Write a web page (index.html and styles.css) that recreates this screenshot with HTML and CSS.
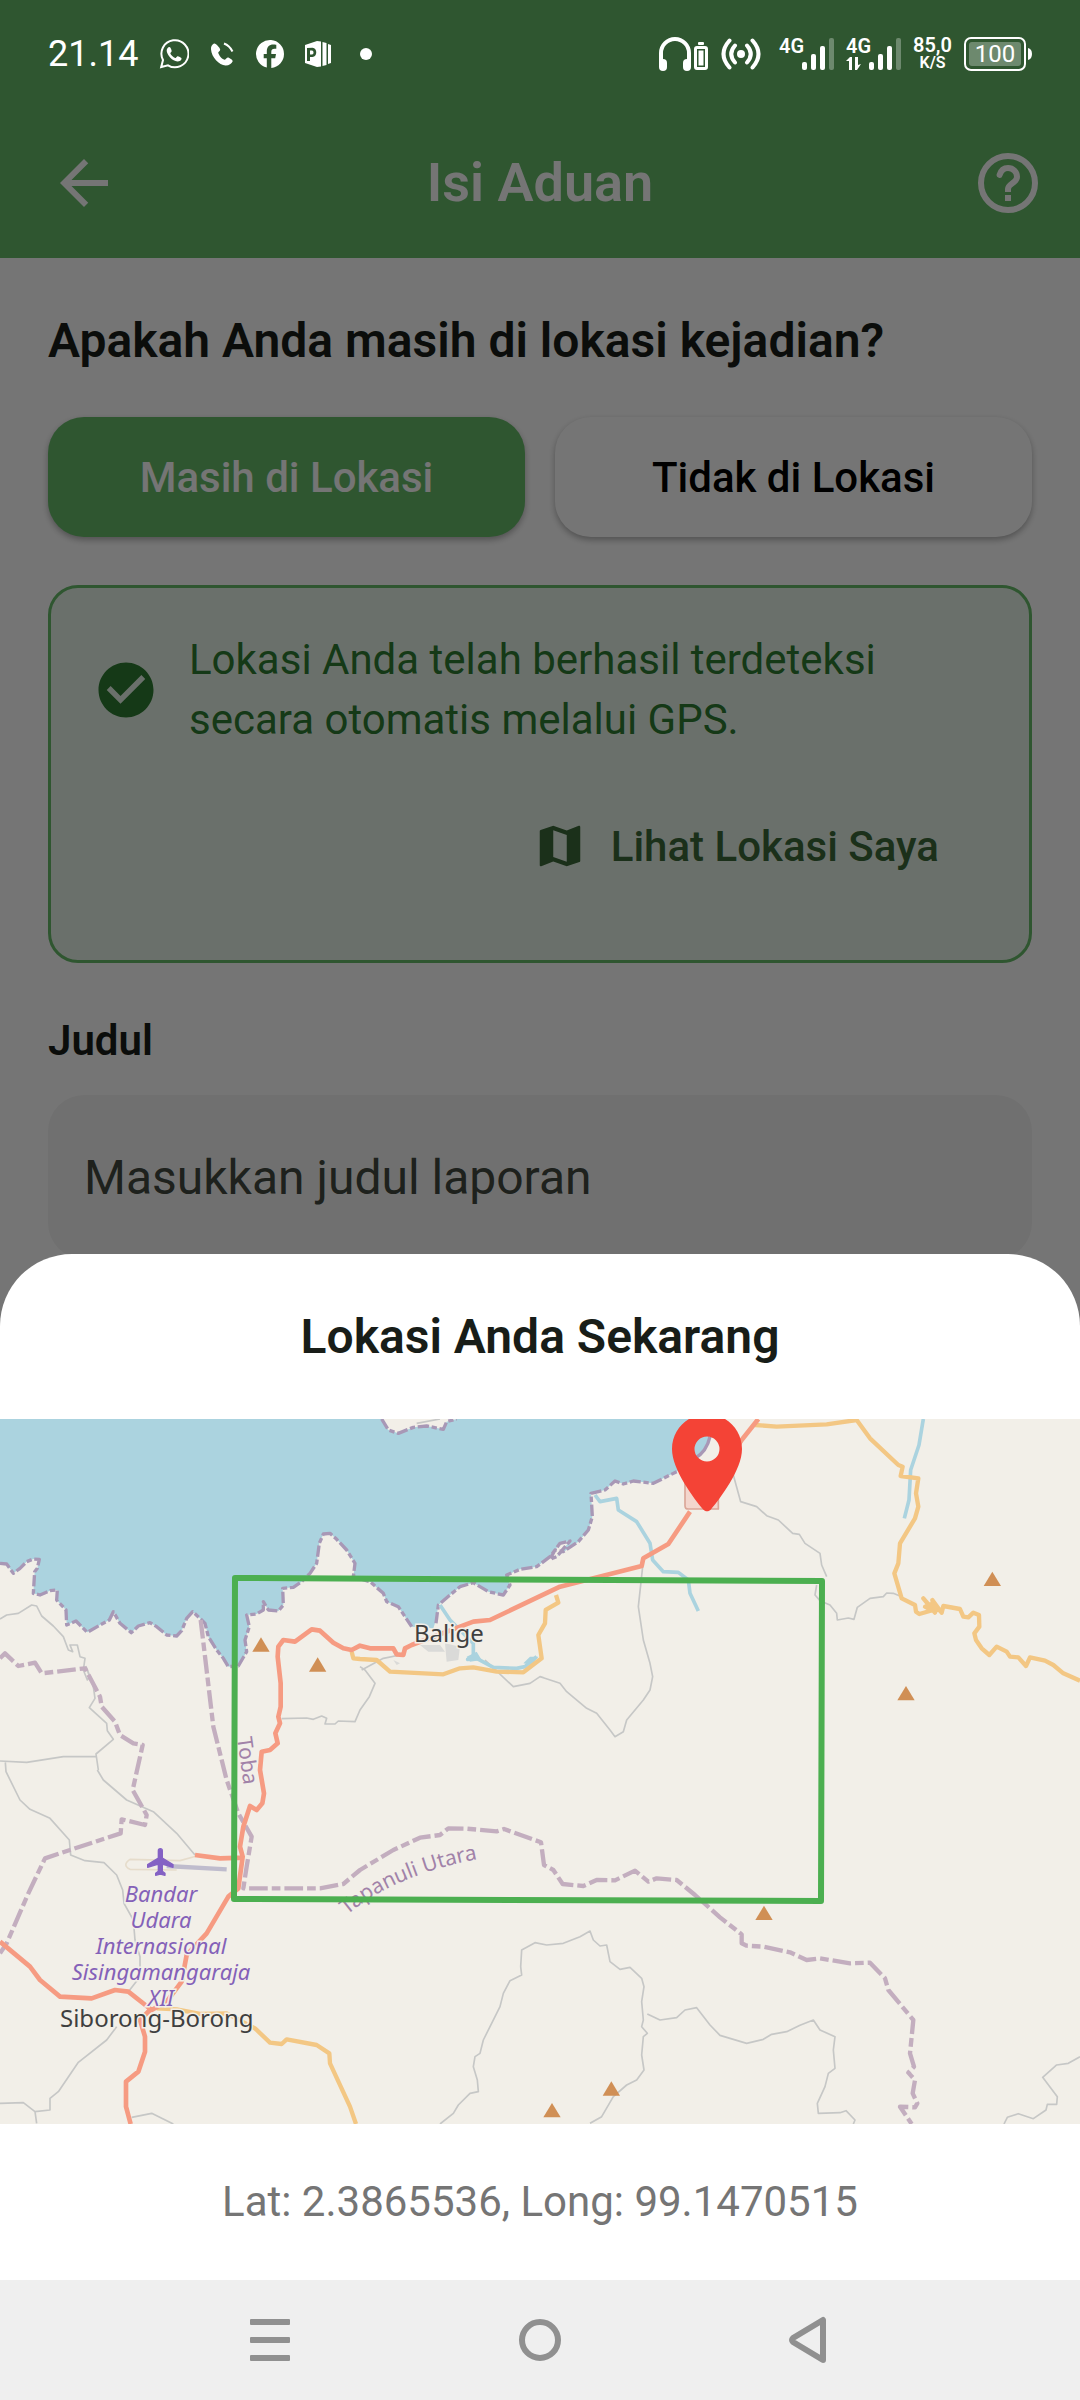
FILE: index.html
```html
<!DOCTYPE html>
<html lang="id">
<head>
<meta charset="utf-8">
<meta name="viewport" content="width=device-width, initial-scale=1">
<title>Isi Aduan</title>
<link rel="stylesheet" href="styles.css">
</head>
<body>
<div class="screen">
  <div class="app">
    <header class="appbar">
      <button class="icon-button back" type="button" aria-label="Kembali">
        <svg class="icon" viewBox="0 0 24 24"><path d="M20 11H7.83l5.59-5.59L12 4l-8 8 8 8 1.41-1.41L7.83 13H20v-2z"/></svg>
      </button>
      <h1 class="appbar-title">Isi Aduan</h1>
      <button class="icon-button help" type="button" aria-label="Bantuan">
        <svg class="icon" viewBox="0 0 24 24"><circle class="line" cx="12" cy="12" r="9"/><path class="line round" d="M9.2 9.3C9.7 7.6 10.8 7 12 7c1.700 0 3 1.300 3 2.900C15 12 12 12.200 12 14"/><rect x="11" y="16" width="2" height="2"/><rect x="11" y="14" width="2" height="1"/></svg>
      </button>
    </header>
    <main class="content">
      <h2 class="question">Apakah Anda masih di lokasi kejadian?</h2>
      <div class="choices">
        <button class="choice choice-active" type="button">Masih di Lokasi</button>
        <button class="choice" type="button">Tidak di Lokasi</button>
      </div>
      <section class="notice">
        <div class="notice-row">
          <svg class="notice-icon" viewBox="0 0 24 24"><path d="M12 2C6.480 2 2 6.480 2 12s4.480 10 10 10 10-4.480 10-10S17.520 2 12 2zm-2 15l-5-5 1.410-1.410L10 14.170l7.590-7.590L19 8l-9 9z"/></svg>
          <p class="notice-text">Lokasi Anda telah berhasil terdeteksi secara otomatis melalui GPS.</p>
        </div>
        <button class="map-button" type="button">
          <svg class="map-icon" viewBox="0 0 24 24"><path d="M20.500 3l-.160.030L15 5.100 9 3 3.360 4.900c-.210.070-.360.250-.360.480V20.500c0 .280.220.500.500.500l.160-.030L9 18.900l6 2.100 5.640-1.900c.210-.070.360-.250.360-.480V3.500c0-.280-.220-.500-.500-.500zM15 19l-6-2.110V5l6 2.110V19z"/></svg>
          Lihat Lokasi Saya
        </button>
      </section>
      <label class="field-label" for="judul">Judul</label>
      <input class="field" id="judul" type="text" placeholder="Masukkan judul laporan">
    </main>
  </div>

  <div class="overlay">
    <div class="status">
      <div class="status-left">
        <span class="clock">21.14</span>
        <svg class="status-icon" viewBox="0 0 30 30"><path class="line" d="M2.200 28l1.800-7A13.500 13.500 0 1 1 9 26.300z"/><path d="M10.500 8c-1.500.100-3 1.800-2.800 4 .400 4 5.800 10.400 10.700 10.400 2.300 0 4.100-1.300 4.200-3 0-.700-3.600-2.400-4.200-2.200-.600.200-1.600 2-2.200 1.900-1.800-.600-4.400-3.200-4.900-4.900.100-.700 1.500-1.300 1.400-2.200C12.600 11 11.600 8 10.500 8z"/></svg>
        <svg class="status-icon" viewBox="0 0 30 30"><path d="M7 4.500C5 5.500 3.800 7.500 4 10.200c.500 8 8 16 14.500 16.200 3.500.100 6-1.600 7.200-4.200.300-1-3.700-3.800-5-3.600-1.300.300-2.200 2.300-3.200 2.200-2.800-.800-5.500-4.300-6.300-7 .100-1.200 2.200-2 2-3.400C12.800 8.800 9 4 7 4.500z"/><path class="line" d="M17 4.500q5.500 2 8.500 8"/></svg>
        <svg class="status-icon" viewBox="0 0 30 30"><path d="M29 15a14 14 0 1 0-17.200 13.600v-9.300H8.700V15h3.100v-2.500c0-4.800 2.300-7 6.600-7 .900 0 2.300.200 2.900.300v4h-1.700c-2.300 0-3.300.900-3.300 3.100V15h4.700l-.800 4.300h-3.900v9.600A14 14 0 0 0 29 15z"/></svg>
        <svg class="status-icon" viewBox="0 0 30 30"><path fill-rule="evenodd" d="M2 6l12-4v26l-12-4zM4 9v13h3v-4h2.500c5 0 5-9.200 0-9.200zM7 11.500h2c2 0 2 4 0 4H7z"/><path d="M14 2l4 .500v25L14 28zM19.500 3l4 1v22l-4 1zM25 5l3 1v18l-3 1z"/></svg>
        <svg class="status-icon" viewBox="0 0 30 30"><circle cx="15" cy="15" r="6"/></svg>
      </div>
      <div class="status-right">
        <svg class="headset" viewBox="0 0 50 36"><path class="line thick" d="M2 29V17a14 14 0 0 1 28 0v12"/><rect x="0" y="23" width="8" height="12" rx="4"/><rect x="24" y="23" width="8" height="12" rx="4"/><rect x="39" y="6" width="6" height="3" rx="1"/><path fill-rule="evenodd" d="M38 10h8q3 0 3 3v18q0 3-3 3h-8q-3 0-3-3V13q0-3 3-3zM38 13v18h8V13zM39.500 14.500h5v15h-5z"/></svg>
        <svg class="hotspot" viewBox="0 0 40 32"><circle cx="20" cy="16" r="4"/><path class="line thick round" d="M8.500 2.500Q-3.500 16 8.500 29.500M31.500 2.500Q43.500 16 31.500 29.500M14 7.500Q6.500 16 14 24.500M26 7.500Q33.500 16 26 24.500"/></svg>
        <svg class="signal" viewBox="0 -4 55 42"><text class="net" x="0" y="16">4G</text><rect x="23" y="25" width="5" height="8" rx="2"/><rect x="32" y="17" width="5" height="16" rx="2"/><rect x="41" y="9" width="5" height="24" rx="2"/><rect class="dim" x="50" y="1" width="5" height="32" rx="2"/></svg>
        <svg class="signal" viewBox="0 -4 55 42"><text class="net" x="0" y="16">4G</text><path d="M0 24l4-4h2v13H3v-9zM9 20h3v8l3-1-4 6H9z"/><rect x="23" y="25" width="5" height="8" rx="2"/><rect x="32" y="17" width="5" height="16" rx="2"/><rect x="41" y="9" width="5" height="24" rx="2"/><rect class="dim" x="50" y="1" width="5" height="32" rx="2"/></svg>
        <div class="speed"><span>85,0</span><span class="unit">K/S</span></div>
        <svg class="battery" viewBox="0 0 68 36"><rect class="line" x="1" y="2" width="60" height="32" rx="6"/><rect class="dim" x="5" y="6" width="52" height="24" rx="3"/><path d="M64 12q4 1 4 6t-4 6z"/><text class="level" x="31" y="26" text-anchor="middle">100</text></svg>
      </div>
    </div>

    <section class="sheet" role="dialog" aria-labelledby="sheet-title">
      <h2 class="sheet-title" id="sheet-title">Lokasi Anda Sekarang</h2>
      <svg class="map" viewBox="0 0 1080 705" preserveAspectRatio="xMidYMid slice" role="img" aria-label="Peta lokasi">
        <defs>
          <path id="peak" d="M0-22L26 21H-26z"/>
          <path id="regency" d="M347 496Q398 453 490 438"/>
        </defs>
        <g transform="scale(.333333) translate(0 -27)">
          <path class="water" d="M0 27V460L20 462 40 490 60 475 80 455 100 447 118 448 112 475 104 485 100 550 120 555 150 542 172 540 170 570 198 600 200 645 228 633 262 667 300 645 328 630 340 605 360 640 394 668 415 648 450 638 470 650 500 675 530 678 545 662 560 625 578 605 600 625 615 640 625 680 650 720 670 745 685 770 715 768 740 725 735 690 748 650 740 615 770 612 790 600 790 575 805 600 835 603 850 585 848 535 880 532 905 515 930 490 950 460 958 400 970 372 990 370 1010 388 1040 420 1065 460 1060 500 1110 515 1150 550 1160 575 1195 590 1215 620 1235 650 1300 655 1308 630 1315 585 1350 555 1380 530 1420 518 1465 545 1510 555 1530 525 1520 495 1560 478 1610 470 1650 440 1680 400 1710 393 1670 440 1735 395 1765 360 1777 320 1773 250 1815 240 1845 213 1870 222 1900 213 1960 220 1990 205 2030 185 2095 140 2130 90 2110 27z"/>
          <path class="coast" d="M0 460L20 462 40 490 60 475 80 455 100 447 118 448 112 475 104 485 100 550 120 555 150 542 172 540 170 570 198 600 200 645 228 633 262 667 300 645 328 630 340 605 360 640 394 668 415 648 450 638 470 650 500 675 530 678 545 662 560 625 578 605 600 625 615 640 625 680 650 720 670 745 685 770 715 768 740 725 735 690 748 650 740 615 770 612 790 600 790 575 805 600 835 603 850 585 848 535 880 532 905 515 930 490 950 460 958 400 970 372 990 370 1010 388 1040 420 1065 460 1060 500 1110 515 1150 550 1160 575 1195 590 1215 620 1235 650M1308 640L1315 585 1350 555 1380 530 1420 518 1465 545 1510 555 1530 525 1520 495 1560 478 1610 470 1650 440 1680 400 1710 393 1670 440 1650 448 1665 420 1690 425 1735 395 1765 360 1777 320 1773 250 1815 240 1845 213 1870 222 1900 213 1960 220 1990 205 2030 185"/>
          <path class="coast solid" d="M2085 145Q2120 125 2130 80"/>
          <path class="land" d="M1145 27L1165 60 1195 70 1240 52 1280 48 1330 58 1340 35 1370 27z"/>
          <path class="coast" d="M1145 27L1165 60 1195 70 1240 52 1280 48 1330 58 1340 35 1370 27"/>

          <!-- minor roads -->
          <path class="minor" d="M0 627L20 615 55 610 95 585 110 588 125 618 160 648 190 680 205 720 218 725 210 705 232 705 240 740 255 745 250 780 262 810 270 800 258 770 280 830 285 865 268 893 320 940 322 962 340 988 288 1032 295 1080M0 1053L80 1057 190 1040 288 1040M16 1057L18 1085 60 1170 90 1198 150 1225 208 1290 212 1335 255 1352 312 1358 350 1395 368 1440 372 1480 400 1530 405 1590 420 1640 420 1700 385 1745M350 1850L320 1890 235 1957 175 2045 150 2065 150 2100 105 2105 70 2078 0 2080M105 2105L110 2140M395 2122L455 2110 520 2142M292 1080L310 1110 380 1170 460 1205 530 1270 585 1335M845 926L920 924 940 928 965 918 980 925 975 942 1005 942 1015 933 1065 935 1080 900 1108 860 1125 820 1095 780 1080 770M1085 780L1150 745 1200 735M1455 750L1540 830 1590 820 1620 800 1630 803 1680 820 1700 845 1760 895 1790 910 1830 960 1845 980 1870 965 1880 930 1930 870 1950 840 1958 800 1950 760 1930 690 1915 590 1928 470M1250 40L1320 27"/>
          <path class="minor" d="M1320 2142L1360 2110 1375 2085 1410 2050 1435 2045 1432 2010 1420 1970 1425 1940 1440 1930 1450 1890 1500 1790 1510 1750 1530 1712 1565 1695 1562 1670 1565 1620 1605 1598 1640 1605 1690 1600 1740 1580 1770 1563 1780 1590 1800 1608 1820 1605 1830 1655 1860 1678 1890 1672 1925 1705 1932 1730 1925 1775 1930 1830 1925 1850 1942 1870 1930 1880 1925 1935 1932 1980 1910 2010 1880 2025 1840 2060 1805 2120 1770 2140M1942 1812L1980 1830 2030 1823 2055 1800 2090 1793 2130 1845 2160 1876 2240 1900 2290 1888 2315 1873 2360 1865 2400 1846 2440 1830 2460 1860 2505 1880 2500 1920 2505 1975 2485 1990 2475 2030 2452 2080 2455 2110 2520 2108 2538 2102 2565 2130 2560 2142M3240 1940L3205 1960 3170 1965 3128 2002 3172 2060 3170 2083 3142 2083 3138 2100 3100 2126 3055 2111 3022 2122 3012 2142"/>
          <path class="minor" d="M2200 195L2222 275 2270 290 2300 317 2335 330 2378 370 2398 373 2415 400 2460 430 2465 465 2480 500M2450 525L2445 555 2460 572 2490 585 2510 610 2512 630 2545 624 2562 628 2572 592 2610 565 2650 560 2660 549 2680 550 2705 560"/>
          <!-- rivers -->
          <path class="river" d="M1785 255L1800 275 1850 265 1855 300 1910 335 1950 400 1958 450 1990 485 2035 487 2065 510 2070 550 2095 603M1320 585L1350 630 1420 700 1420 745 1403 748 1430 745 1480 772 1550 775 1575 770 1610 740M2770 27L2757 105 2732 180 2727 270 2713 325"/>
          <path class="river-fill" d="M1400 740l30-15 15 25-35 5zM1570 760l20-20 25 0-20 25z"/>
          <path class="town" d="M1260 705h60l15 20h-50zM1335 700l45 10-5 40-35 5zM1180 750l20 10-10 5z"/>
          <!-- regency borders -->
          <path class="border" d="M0 745L15 730 55 768 105 758 125 790 255 775 300 860 305 890 345 935 360 975 400 1000 428 1005 398 1140 440 1215 435 1245 365 1228 362 1270 210 1320 135 1345 85 1450 20 1600 0 1630M602 630L640 950 680 1110 715 1210 755 1280 740 1370 730 1435 960 1435 1030 1422 1080 1380 1180 1320 1260 1283 1320 1275 1345 1255 1400 1256 1490 1264 1512 1257 1623 1297 1632 1365 1660 1380 1688 1422 1750 1428 1790 1410 1845 1411 1905 1382 1945 1415 1970 1405 2030 1410 2085 1455 2160 1522 2225 1573 2225 1600 2240 1607 2290 1610 2370 1627 2420 1650 2460 1645 2550 1660 2610 1658 2655 1705 2665 1740 2740 1830 2730 1930 2742 1970 2725 1988 2745 2010 2738 2050 2752 2080 2745 2092 2700 2090 2735 2142"/>
          <!-- airfield -->
          <path class="apron" d="M590 1338L540 1352 390 1348Q365 1365 390 1378L530 1380"/>
          <path class="runway" d="M500 1368L680 1378"/>
          <!-- secondary roads -->
          <path class="secondary" d="M1055 725L1060 745 1080 747 1130 750 1170 785 1330 793 1380 775 1420 772 1490 785 1570 787 1625 745 1615 675 1635 640 1637 600 1675 578 1668 555M470 1795L530 1798 600 1812 680 1810 765 1855 810 1898 845 1902 860 1888 950 1905 988 1930 990 1960 1050 2090 1068 2142"/>
          <path class="secondary" d="M2265 45L2330 50 2480 43 2570 30 2610 85 2695 165 2708 170 2702 198 2755 205 2748 250 2755 290 2745 325 2700 400 2695 460 2683 490 2705 565 2745 585 2748 605 2758 612 2800 600 2770 565 2805 608 2797 570 2825 608 2830 588 2880 597 2890 620 2905 622 2920 608 2937 615 2938 650 2923 670 2928 690 2945 715 2968 735 2990 710 3020 725 3030 740 3055 742 3078 768 3090 742 3135 752 3160 765 3190 790 3240 812"/>
          <path class="secondary" d="M2775 590L2795 582 2815 600 2790 598z"/>
          <!-- trunk roads -->
          <path class="trunk" d="M2275 27L2225 90 2160 190M2070 305L2005 402 1930 445 1925 468 1680 530 1470 630 1420 635 1235 705 1215 715 1210 735 1190 733 1180 715 1110 715 1080 707 1055 720 1030 715 1000 698 960 662 935 658 885 695 850 690 835 710 833 740 842 820 842 890 835 920 840 940 826 970 833 1000 810 1020 785 1025 780 1080 792 1150 787 1180 770 1200 750 1188 730 1250 720 1310 728 1340 715 1435 685 1460 620 1570 560 1635 545 1715 500 1775 455 1800 385 1745 345 1740 275 1765 180 1760 120 1710 90 1670 0 1595M585 1335L660 1345 730 1343M450 1800L420 1830 435 1880 435 1925 415 1985 378 2015 378 2090 392 2142"/>
          <g class="peaks">
            <use href="#peak" x="783" y="704"/><use href="#peak" x="953" y="764"/><use href="#peak" x="2977" y="507"/><use href="#peak" x="2718" y="850"/><use href="#peak" x="2292" y="1509"/><use href="#peak" x="1834" y="2036"/><use href="#peak" x="1656" y="2101"/>
          </g>
          <path class="shield" d="M2055 190h100v107q0 0-10 0h-80q-10 0-10-10z"/>
          <path class="plane" transform="translate(435 1308) scale(4)" d="M21 16v-2l-8-5V3.500c0-.830-.670-1.500-1.500-1.500S10 2.670 10 3.500V9l-8 5v2l8-2.500V19l-2 1.500V22l3.500-1 3.500 1v-1.500L13 19v-5.500l8 2.500z"/>
        </g>
        <text class="place" x="414" y="223">Balige</text>
        <text class="place" x="60" y="608">Siborong-Borong</text>
        <text class="airport" text-anchor="middle"><tspan x="161" y="483">Bandar</tspan><tspan x="161" y="509">Udara</tspan><tspan x="161" y="535">Internasional</tspan><tspan x="161" y="561">Sisingamangaraja</tspan><tspan x="161" y="587">XII</tspan></text>
        <text class="area" transform="translate(237 319) rotate(82)">Toba</text>
        <text class="area"><textPath href="#regency">Tapanuli Utara</textPath></text>
        <path class="bounds" d="M235 159L822 162 821 482 234 480z"/>
        <path class="pin" fill-rule="evenodd" transform="translate(647 -15) scale(5)" d="M12 2C8.130 2 5 5.130 5 9c0 4.170 4.420 9.920 6.240 12.110.400.480 1.130.480 1.530 0C14.580 18.920 19 13.170 19 9c0-3.870-3.130-7-7-7zm0 9.500a2.500 2.500 0 1 1 0-5 2.500 2.500 0 0 1 0 5z"/>
      </svg>
      <p class="coords">Lat: 2.3865536, Long: 99.1470515</p>
    </section>

    <nav class="navbar" aria-label="Navigasi sistem">
      <button class="nav-button" type="button" aria-label="Aplikasi terbaru"><svg class="nav-icon" viewBox="0 0 48 48"><rect x="4" y="3" width="40" height="6" rx="1"/><rect x="4" y="21" width="40" height="6" rx="1"/><rect x="4" y="39" width="40" height="6" rx="1"/></svg></button>
      <button class="nav-button" type="button" aria-label="Beranda"><svg class="nav-icon" viewBox="0 0 48 48"><circle class="line heavy" cx="24" cy="24" r="18"/></svg></button>
      <button class="nav-button" type="button" aria-label="Kembali"><svg class="nav-icon" viewBox="0 0 48 48"><path class="line heavy" stroke-linejoin="round" d="M37 4V44L7 26Q5 24 7 22z"/></svg></button>
    </nav>
  </div>
</div>
</body>
</html>
```
FILE: styles.css
```css
* {
  box-sizing: border-box;
}

body,
h1,
h2,
p {
  margin: 0;
}

body {
  font-family: Roboto, "Noto Sans", sans-serif;
  background: #fff;
  color: #181d18;
}

button,
input {
  font: inherit;
  color: inherit;
  border: 0;
  margin: 0;
  padding: 0;
  background: none;
}

svg {
  display: block;
  flex: none;
  fill: currentColor;
}

.line {
  fill: none;
  stroke: currentColor;
  stroke-width: 2;
}

.thick {
  stroke-width: 4;
}

.heavy {
  stroke-width: 6;
}

.round {
  stroke-linecap: round;
}

.dim {
  opacity: 0.3;
}

/* The app and the modal layer share one grid cell */
.screen {
  display: grid;
  min-height: 100vh;
}

.app,
.overlay {
  grid-area: 1 / 1;
  min-width: 0;
}

.appbar {
  display: grid;
  grid-template-columns: 1fr auto 1fr;
  align-items: center;
  height: 258px;
  padding: 108px 36px 0;
  background: #66bb6a;
  color: #fff;
}

.appbar-title {
  font-size: 54px;
  line-height: 72px;
  font-weight: 600;
}

.icon,
.icon-button {
  width: 72px;
  height: 72px;
}

.back {
  margin-left: 12px;
}

.help {
  justify-self: end;
}

.content {
  padding: 48px;
}

.question {
  font-size: 48px;
  line-height: 69px;
  font-weight: 600;
}

.choices {
  display: grid;
  grid-template-columns: 1fr 1fr;
  gap: 30px;
  margin-top: 42px;
}

.choice {
  height: 120px;
  border-radius: 36px;
  background: #fff;
  color: #000;
  font-size: 42px;
  font-weight: 500;
  box-shadow: 0 3px 6px rgba(0, 0, 0, 0.3);
}

.choice-active {
  background: #66bb6a;
  color: #fff;
}

.notice {
  display: flex;
  flex-direction: column;
  gap: 24px;
  margin-top: 48px;
  padding: 42px;
  border: 3px solid #66bb6a;
  border-radius: 30px;
  background: #e8f5e9;
}

.notice-row {
  display: flex;
  align-items: center;
  gap: 30px;
  color: #2e7d32;
}

.notice-icon {
  width: 66px;
  height: 66px;
}

.notice-text {
  font-size: 42px;
  line-height: 60px;
}

.map-button {
  display: flex;
  align-items: center;
  align-self: flex-end;
  gap: 24px;
  height: 144px;
  padding: 0 48px;
  color: #3b6939;
  font-size: 42px;
  font-weight: 500;
}

.map-icon {
  width: 54px;
  height: 54px;
}

.field-label {
  display: block;
  margin-top: 48px;
  font-size: 42px;
  line-height: 60px;
  font-weight: 600;
}

.field {
  display: block;
  width: 100%;
  height: 164px;
  margin-top: 24px;
  padding: 0 36px;
  border-radius: 36px;
  background: #f5f5f5;
  font-size: 48px;
}

.field::placeholder {
  color: #424940;
  opacity: 1;
}

.overlay {
  display: flex;
  flex-direction: column;
  background: rgba(0, 0, 0, 0.54);
}

.status {
  display: flex;
  justify-content: space-between;
  height: 108px;
  padding: 0 48px;
  color: #fff;
}

.status-left,
.status-right {
  display: flex;
  align-items: center;
}

.status-left {
  gap: 18px;
}

.status-right {
  gap: 12px;
}

.clock {
  margin-right: 3px;
  font-size: 36px;
  line-height: 42px;
}

.status-icon {
  width: 30px;
  height: 30px;
}

.headset {
  width: 50px;
  height: 36px;
}

.hotspot {
  width: 40px;
  height: 32px;
  margin-right: 6px;
}

.signal {
  width: 55px;
  height: 42px;
}

.net {
  font-size: 20px;
  font-weight: 600;
}

.speed {
  display: flex;
  flex-direction: column;
  align-items: center;
  font-size: 20px;
  line-height: 18px;
  font-weight: 600;
}

.unit {
  font-size: 16px;
}

.battery {
  width: 68px;
  height: 36px;
}

.level {
  font-size: 24px;
}

.sheet {
  margin-top: auto;
  overflow: hidden;
  border-radius: 72px 72px 0 0;
  background: #fff;
}

.sheet-title {
  padding: 48px;
  font-size: 48px;
  line-height: 69px;
  font-weight: 600;
  text-align: center;
}

.coords {
  padding: 48px;
  font-size: 42px;
  line-height: 60px;
  color: #757575;
  text-align: center;
}

.map {
  width: 100%;
  aspect-ratio: 1080 / 705;
  background: #f2efe8;
  font-family: "Noto Sans", sans-serif;
}

.map path {
  fill: none;
  stroke-linejoin: round;
}

.map .water {
  fill: #abd3df;
}

.map .land {
  fill: #f2efe8;
}

.map .coast {
  stroke: #a898b6;
  stroke-width: 10;
  stroke-dasharray: 34 8 16 8;
}

.map .solid {
  stroke-dasharray: none;
}

.map .border {
  stroke: #c3aebf;
  stroke-width: 13;
  stroke-dasharray: 56 12 26 12;
}

.map .minor {
  stroke: #c6c7c6;
  stroke-width: 5;
}

.map .river {
  stroke: #abd3df;
  stroke-width: 11;
}

.map .river-fill {
  fill: #abd3df;
}

.map .town {
  fill: #dadad8;
}

.map .secondary {
  stroke: #f3c784;
  stroke-width: 13;
}

.map .trunk {
  stroke: #f69b82;
  stroke-width: 14;
}

.map .apron {
  stroke: #e6dccb;
  stroke-width: 5;
}

.map .runway {
  stroke: #bfbccd;
  stroke-width: 13;
}

.map .peaks path,
.map #peak {
  fill: #d08f55;
}

.map .shield {
  fill: #f3d6cd;
  stroke: #dba798;
  stroke-width: 5;
}

.map .plane {
  fill: #8461c4;
  stroke: #8461c4;
  stroke-width: 1;
}

.map .bounds {
  stroke: #4caf50;
  stroke-width: 6;
}

.map .pin {
  fill: #f44336;
}

.place,
.airport,
.area {
  stroke: #f2efe8;
  stroke-width: 3;
  paint-order: stroke;
}

.place {
  font-size: 24px;
  fill: #3f3f3f;
}

.airport {
  font-size: 22px;
  font-style: italic;
  fill: #8461b8;
}

.area {
  font-size: 21px;
  fill: #a182a8;
}

.navbar {
  display: grid;
  grid-template-columns: repeat(3, 1fr);
  height: 120px;
  padding: 0 12.5%;
  background: #efefef;
  color: #909090;
}

.nav-button {
  display: grid;
  place-items: center;
}

.nav-icon {
  width: 48px;
  height: 48px;
}
```
